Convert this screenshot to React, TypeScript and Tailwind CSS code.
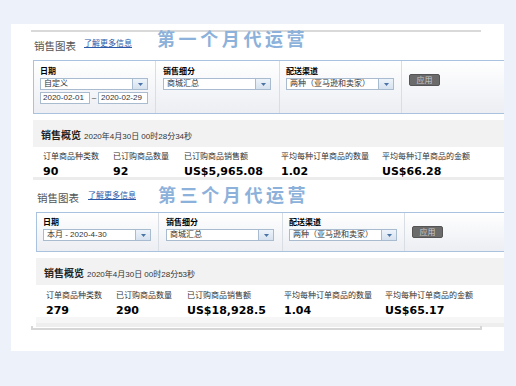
const cjk = { fontFamily: '"Noto Sans CJK SC", "Liberation Sans", sans-serif' };
const mixed = { fontFamily: '"Liberation Sans", "Noto Sans CJK SC", sans-serif' };
const num = { fontFamily: '"DejaVu Sans", "Liberation Sans", sans-serif' };

function Select({ text }: { text: string }) {
  return (
    <div className="flex h-[12px] w-[108px] border border-[#a9bccf] bg-white">
      <span className="flex-1 truncate pl-[3px] text-[8px] leading-[10px] text-[#333]" style={mixed}>
        {text}
      </span>
      <span className="flex w-[15px] items-center justify-center border-l border-[#a9bccf] bg-gradient-to-b from-[#edf3fa] to-[#d6e2ef]">
        <svg width="5" height="3" viewBox="0 0 5 3">
          <path d="M0 0h5L2.5 3z" fill="#4a73a6" />
        </svg>
      </span>
    </div>
  );
}

function DateBox({ text }: { text: string }) {
  return (
    <div className="h-[12px] w-[50px] border border-[#a9bccf] bg-white pl-[2px] text-[8px] leading-[10px] text-[#333]" style={mixed}>
      {text}
    </div>
  );
}

function Label({ text }: { text: string }) {
  return (
    <div className="text-[8px] font-bold leading-none text-black" style={cjk}>
      {text}
    </div>
  );
}

function FilterPanel({ dateText, range }: { dateText: string; range?: [string, string] }) {
  const pad = range ? "pt-[6px]" : "pt-[5px]";
  return (
    <div className={`flex border-y border-l border-[#a9c3df] bg-gradient-to-b from-white to-[#eceef3] ${range ? "h-[54px]" : "h-[40px]"}`}>
      <div className={`w-[122px] border-r border-[#d9dde4] pl-[6px] ${pad}`}>
        <Label text="日期" />
        <div className="mt-[3px]">
          <Select text={dateText} />
        </div>
        {range && (
          <div className="mt-[2px] flex items-center">
            <DateBox text={range[0]} />
            <span className="w-[8px] text-center text-[8px] leading-none text-[#333]" style={mixed}>–</span>
            <DateBox text={range[1]} />
          </div>
        )}
      </div>
      <div className={`w-[124px] border-r border-[#d9dde4] pl-[7px] ${pad}`}>
        <Label text="销售细分" />
        <div className="mt-[3px]">
          <Select text="商城汇总" />
        </div>
      </div>
      <div className={`w-[122px] border-r border-[#d9dde4] pl-[6px] ${pad}`}>
        <Label text="配送渠道" />
        <div className="mt-[3px]">
          <Select text="两种（亚马逊和卖家）" />
        </div>
      </div>
      <div className="flex-1 pl-[7px] pt-[13px]">
        <div className="flex h-[12px] w-[31px] items-center justify-center rounded-[2px] border border-[#555] bg-[#6b6b6b] text-[8px] leading-none text-[#c9c9c9]" style={cjk}>
          应用
        </div>
      </div>
    </div>
  );
}

type Stat = { label: string; value: string };

function Overview({ time, stats, rowH, labelTop }: { time: string; stats: Stat[]; rowH: string; labelTop: string }) {
  const widths = ["w-[70px]", "w-[71px]", "w-[97px]", "w-[101px]", "flex-1"];
  return (
    <div className="mt-[6px] bg-[#f2f2f2]">
      <div className="flex h-[27px] items-baseline gap-[3px] pl-[8px] pt-[10px]">
        <span className="text-[10px] font-bold leading-none text-[#222]" style={cjk}>销售概览</span>
        <span className="text-[8px] leading-none text-[#333]" style={mixed}>{time}</span>
      </div>
      <div className={`flex bg-white pl-[10px] ${rowH} ${labelTop}`}>
        {stats.map((s, i) => (
          <div key={s.label} className={widths[i]}>
            <div className="text-[8px] leading-none text-[#333]" style={cjk}>{s.label}</div>
            <div className="mt-[6px] text-[11px] font-bold leading-none text-black" style={num}>{s.value}</div>
          </div>
        ))}
      </div>
    </div>
  );
}

function ChartHeader({ h, pt, gap }: { h: string; pt: string; gap: string }) {
  return (
    <div className={`flex items-start pl-[1px] ${h} ${pt} ${gap}`}>
      <span className="text-[10.5px] leading-none text-[#555]" style={cjk}>销售图表</span>
      <span className="-mt-[2px] text-[8px] leading-none text-[#2c5aa8] underline underline-offset-1" style={cjk}>了解更多信息</span>
    </div>
  );
}

const labels = ["订单商品种类数", "已订购商品数量", "已订购商品销售额", "平均每种订单商品的数量", "平均每种订单商品的金额"];

export default function App() {
  const first = ["90", "92", "US$5,965.08", "1.02", "US$66.28"];
  const third = ["279", "290", "US$18,928.5", "1.04", "US$65.17"];

  return (
    <div className="h-[386px] w-[516px] overflow-hidden bg-[#edf1f9] pl-[11px] pt-[24px]">
      <div className="relative h-[327px] w-[493px] overflow-hidden bg-white">
        <div className="ml-[20px] mt-[6px] h-[2px] w-[450px] bg-[#d9d9d9]" />

        <div className="ml-[22px] w-[480px]">
          <ChartHeader h="h-[28px]" pt="pt-[9px]" gap="gap-[8px]" />
          <FilterPanel dateText="自定义" range={["2020-02-01", "2020-02-29"]} />
          <Overview
            time="2020年4月30日 00时28分34秒"
            stats={labels.map((l, i) => ({ label: l, value: first[i] }))}
            rowH="h-[30px]"
            labelTop="pt-[5px]"
          />
          <div className="h-[3px] bg-[#ececec]" />
        </div>

        <div className="ml-[25px] w-[480px]">
          <ChartHeader h="h-[32px]" pt="pt-[13px]" gap="gap-[9px]" />
          <FilterPanel dateText="本月 - 2020-4-30" />
          <Overview
            time="2020年4月30日 00时28分53秒"
            stats={labels.map((l, i) => ({ label: l, value: third[i] }))}
            rowH="h-[32px]"
            labelTop="pt-[6px]"
          />
          <div className="h-[6px] bg-[#f6f6f6]" />
          <div className="h-[4px] bg-[#eeeeee]" />
        </div>
        <div className="-mt-[1px] ml-[20px] h-[4px] w-[451px] border-x-2 border-b-2 border-[#d6d6d6]" />

        <div className="absolute left-[146px] top-[5px] text-[18px] font-bold leading-none tracking-[3.6px] text-[#8cb1da]" style={cjk}>
          第一个月代运营
        </div>
        <div className="absolute left-[147px] top-[161px] text-[18px] font-bold leading-none tracking-[3.6px] text-[#8cb1da]" style={cjk}>
          第三个月代运营
        </div>
      </div>
    </div>
  );
}
